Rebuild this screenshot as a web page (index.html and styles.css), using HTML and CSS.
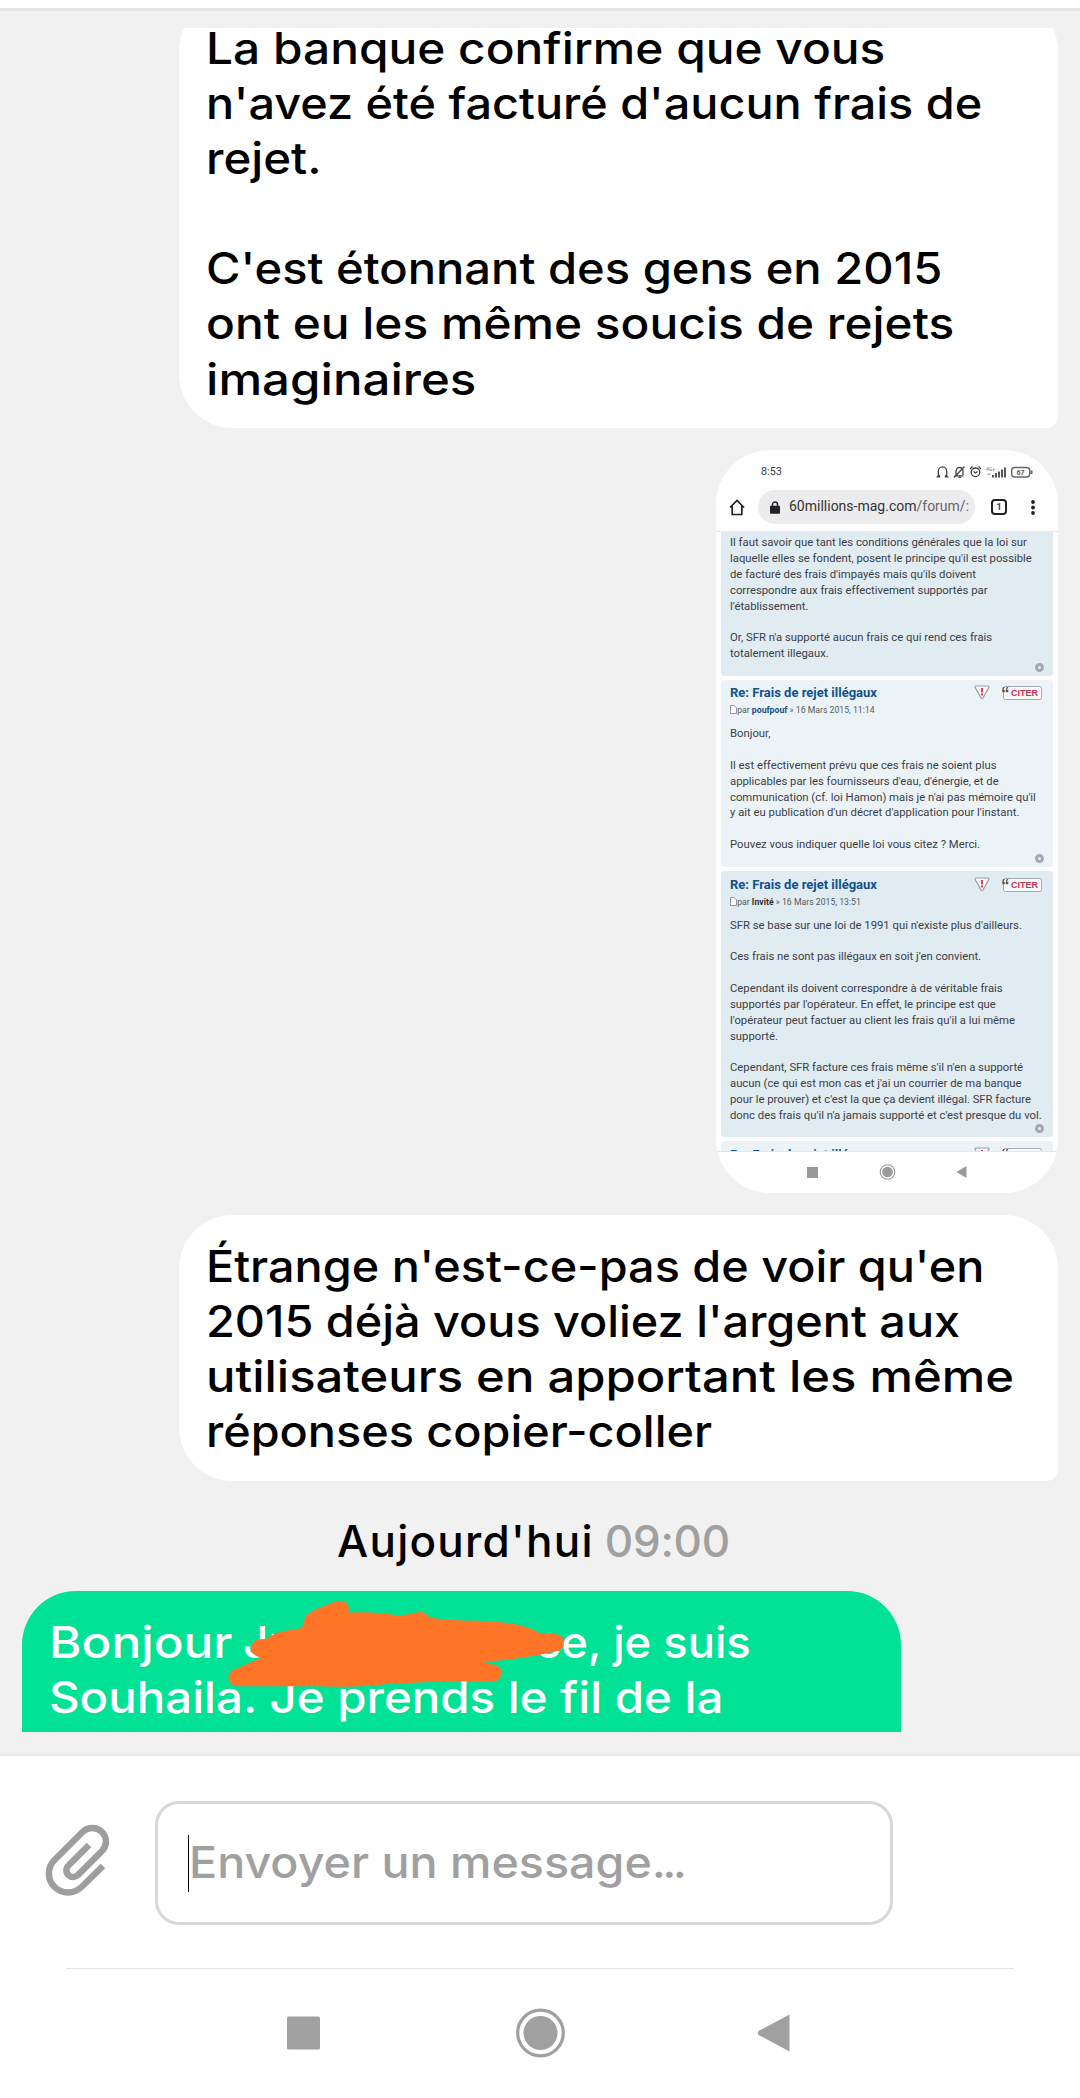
FILE: index.html
```
<!DOCTYPE html>
<html lang="fr">
<head>
    <meta charset="UTF-8">
    <meta name="viewport" content="width=device-width, initial-scale=1.0">
    <title>Messagerie</title>
    <link rel="stylesheet" href="styles.css">
</head>
<body>
    <div class="topbar"></div>

    <div class="chat">
        <div class="bubble sent first">
            <span class="line s4">La banque confirme que vous</span>
            <span class="line s1">n'avez été facturé d'aucun frais de</span>
            <span class="line s3">rejet.</span>
            <span class="line">&nbsp;</span>
            <span class="line s2">C'est étonnant des gens en 2015</span>
            <span class="line s4">ont eu les même soucis de rejets</span>
            <span class="line s6">imaginaires</span>
        </div>

        <div class="capture">
            <div class="status">
                <span class="clock">8:53</span>
                <svg class="status-icons" viewBox="0 0 98 14" width="98" height="14">
                    <g fill="none" stroke="#444" stroke-width="1.3">
                        <path d="M.5 11.800h3V10M12.500 11.800h-3V10M2.300 11.500V6.300a4.200 4.500 0 0 1 8.400 0v5.200"/>
                        <path d="M18.500 10.800h9M20 10V6.500c0-2.500 1.500-4 3.500-4s3.500 1.500 3.500 4V10M28.500 1.500L18 12.500M22.500 12.300h2.500"/>
                        <circle cx="39.500" cy="7.300" r="4.300"/>
                        <path d="M34 4l2.500-2.500M45 4l-2.500-2.500M37.500 6.500l2 1.500 2-1.500"/>
                    </g>
                    <text x="50" y="5.500" class="net">4G+</text>
                    <g fill="#555">
                        <rect x="51" y="8.500" width="3.500" height="1.500" opacity=".4"/>
                        <rect x="56" y="10" width="2" height="2.500"/>
                        <rect x="59" y="8" width="2" height="4.500"/>
                        <rect x="62" y="6.500" width="2" height="6"/>
                        <rect x="65" y="4.500" width="2" height="8"/>
                        <rect x="68" y="2.500" width="2" height="10"/>
                    </g>
                    <rect x="75.700" y="2.500" width="18" height="9.500" rx="3" fill="none" stroke="#666" stroke-width="1.400"/>
                    <rect x="94.500" y="5.500" width="2" height="3.500" fill="#666"/>
                    <text x="80.500" y="9.800" class="bat">67</text>
                </svg>
            </div>
            <div class="urlbar">
                <svg class="home" viewBox="0 0 16 17" width="16" height="17"><path d="M1 8.500L8 1.500l7 7M3.200 7v8.500h9.600V7" fill="none" stroke="#222" stroke-width="1.700"/></svg>
                <div class="url">
                    <svg viewBox="0 0 10 13" width="10" height="13"><path d="M2.500 6V3.500a2.500 2.500 0 0 1 5 0V6" fill="none" stroke="#222" stroke-width="1.400"/><rect y="4.800" width="10" height="8" rx="1" fill="#222"/></svg>
                    <span>60millions-mag.com<em>/forum/:</em></span>
                </div>
                <div class="tabs">1</div>
                <svg class="dots" viewBox="0 0 4 15" width="4" height="15" fill="#222"><circle cx="2" cy="2" r="1.900"/><circle cx="2" cy="7.500" r="1.900"/><circle cx="2" cy="13" r="1.900"/></svg>
            </div>
            <div class="forum">
                <div class="post post-a">
                    Il faut savoir que tant les conditions générales que la loi sur<br>
                    laquelle elles se fondent, posent le principe qu'il est possible<br>
                    de facturé des frais d'impayés mais qu'ils doivent<br>
                    correspondre aux frais effectivement supportés par<br>
                    l'établissement.<br><br>
                    Or, SFR n'a supporté aucun frais ce qui rend ces frais<br>
                    totalement illegaux.
                    <i class="up"></i>
                </div>
                <div class="post post-b">
                    <div class="head">
                        <h3>Re: Frais de rejet illégaux</h3>
                        <svg class="warn" viewBox="0 0 16 15" width="16" height="15"><path d="M2 1h12q1.300.2.800 1.500L9 13q-1 1.500-2 0L1.200 2.500Q.8 1.200 2 1z" fill="#fafafa" stroke="#999ca3" stroke-width="1.200"/><path d="M8 3v4.500M8 8.600v1.800" stroke="#c2264c" stroke-width="1.700"/></svg>
                        <span class="cite"><b>“</b>CITER</span>
                    </div>
                    <div class="author"><svg viewBox="0 0 7 9" width="7" height="9"><path d="M.5.5h3.500l2.500 2.500v5.500h-6z" fill="#fff" stroke="#888" stroke-width=".9"/></svg> par <b class="link">poufpouf</b> » 16 Mars 2015, 11:14</div>
                    Bonjour,<br><br>
                    Il est effectivement prévu que ces frais ne soient plus<br>
                    applicables par les fournisseurs d'eau, d'énergie, et de<br>
                    communication (cf. loi Hamon) mais je n'ai pas mémoire qu'il<br>
                    y ait eu publication d'un décret d'application pour l'instant.<br><br>
                    Pouvez vous indiquer quelle loi vous citez ? Merci.
                    <i class="up"></i>
                </div>
                <div class="post post-c">
                    <div class="head">
                        <h3>Re: Frais de rejet illégaux</h3>
                        <svg class="warn" viewBox="0 0 16 15" width="16" height="15"><path d="M2 1h12q1.300.2.800 1.500L9 13q-1 1.500-2 0L1.200 2.500Q.8 1.200 2 1z" fill="#fafafa" stroke="#999ca3" stroke-width="1.200"/><path d="M8 3v4.500M8 8.600v1.800" stroke="#c2264c" stroke-width="1.700"/></svg>
                        <span class="cite"><b>“</b>CITER</span>
                    </div>
                    <div class="author"><svg viewBox="0 0 7 9" width="7" height="9"><path d="M.5.5h3.500l2.500 2.500v5.500h-6z" fill="#fff" stroke="#888" stroke-width=".9"/></svg> par <b>Invité</b> » 16 Mars 2015, 13:51</div>
                    SFR se base sur une loi de 1991 qui n'existe plus d'ailleurs.<br><br>
                    Ces frais ne sont pas illégaux en soit j'en convient.<br><br>
                    Cependant ils doivent correspondre à de véritable frais<br>
                    supportés par l'opérateur. En effet, le principe est que<br>
                    l'opérateur peut factuer au client les frais qu'il a lui même<br>
                    supporté.<br><br>
                    Cependant, SFR facture ces frais même s'il n'en a supporté<br>
                    aucun (ce qui est mon cas et j'ai un courrier de ma banque<br>
                    pour le prouver) et c'est la que ça devient illégal. SFR facture<br>
                    donc des frais qu'il n'a jamais supporté et c'est presque du vol.
                    <i class="up"></i>
                </div>
                <div class="post post-d">
                    <div class="head">
                        <h3>Re: Frais de rejet illégaux</h3>
                        <svg class="warn" viewBox="0 0 16 15" width="16" height="15"><path d="M2 1h12q1.300.2.800 1.500L9 13q-1 1.500-2 0L1.200 2.500Q.8 1.200 2 1z" fill="#fafafa" stroke="#999ca3" stroke-width="1.200"/><path d="M8 3v4.500M8 8.600v1.800" stroke="#c2264c" stroke-width="1.700"/></svg>
                        <span class="cite"><b>“</b>CITER</span>
                    </div>
                </div>
            </div>
            <div class="mini-nav">
                <svg viewBox="0 0 162 16" width="162" height="16" fill="#999">
                    <rect x="1" y="3" width="11" height="11"/>
                    <circle cx="81.500" cy="8" r="7.300" fill="none" stroke="#999" stroke-width="1.100"/>
                    <circle cx="81.500" cy="8" r="5.300"/>
                    <path d="M150.500 8l10-6v12z"/>
                </svg>
            </div>
        </div>

        <div class="bubble sent">
            <span class="line s1">Étrange n'est-ce-pas de voir qu'en</span>
            <span class="line s1">2015 déjà vous voliez l'argent aux</span>
            <span class="line s5">utilisateurs en apportant les même</span>
            <span class="line s1">réponses copier-coller</span>
        </div>

        <div class="date"><span class="day">Aujourd'hui</span><span class="time">09:00</span></div>

        <div class="bubble received">
            <span class="line split"><span class="hello">Bonjour</span><span class="name">Ju</span><span class="rest">ce, je suis</span></span>
            <span class="line s3">Souhaila. Je prends le fil de la</span>
            <svg class="scribble" viewBox="0 0 1200 480" width="400" height="160">
                <path fill="#ff7427" d="M312 128C312 108 330 95 352 86L402 66Q420 58 436 66Q448 74 446 98C500 94 550 99 598 107C625 104 645 96 665 97Q680 99 688 113C730 118 780 122 830 122C900 122 980 134 1020 160C1050 160 1080 158 1090 178Q1096 205 1072 213C1010 228 930 240 852 245Q866 254 888 254Q905 262 904 280Q900 304 878 306C760 302 620 308 540 314C480 320 420 322 350 319L112 319C92 316 82 302 87 285Q93 270 112 265L184 233Q152 226 152 202Q158 180 182 178L202 176C225 155 265 150 292 148Q310 142 312 128Z"/>
            </svg>
        </div>
    </div>

    <div class="composer">
        <svg class="clip" viewBox="0 0 66 72" width="66" height="72">
            <path d="M44 21L23.500 41.500a6.500 6.500 0 0 0 0 9.500a6.800 6.800 0 0 0 9.500 0L57 27a13.500 13.500 0 0 0 0-19a14 14 0 0 0-19.500 0L9.500 36a19 19 0 0 0 0 27a19.500 19.500 0 0 0 27 0L58 42" fill="none" stroke="#9e9e9e" stroke-width="6.500"/>
        </svg>
        <div class="field"><i class="caret"></i><span class="placeholder">Envoyer un message<span class="ellipsis">...</span></span></div>
    </div>

    <div class="navbar">
        <svg viewBox="0 0 506 50" width="506" height="50" fill="#a0a0a0">
            <rect x="0" y="8.500" width="33" height="33" rx="1.500"/>
            <circle cx="253.500" cy="25" r="22.800" fill="none" stroke="#a0a0a0" stroke-width="3.200"/>
            <circle cx="253.500" cy="25" r="17"/>
            <path d="M471.500 23L502.500 6.500V43.500L471.500 27Q470 25 471.500 23z"/>
        </svg>
    </div>
</body>
</html>
```
FILE: styles.css
```
* {
    box-sizing: border-box;
}

body {
    margin: 0;
    height: 2098px;
    display: flex;
    flex-direction: column;
    overflow: hidden;
    background-color: #f1f1f1;
    font-family: Inter, "Open Sans", sans-serif;
    font-size: 44px;
    font-weight: 500;
    line-height: 55.1px;
    color: #000;
}

.topbar {
    flex: none;
    height: 11px;
    background-color: #fff;
    border-bottom: 3px solid #e5e5e5;
}

/* conversation */
.chat {
    flex: none;
    height: 1704px;
    margin-top: 17px;
    padding: 0 22px;
    display: flex;
    flex-direction: column;
    overflow: hidden;
}

.bubble {
    position: relative;
    flex: none;
    width: 879px;
    padding: 24px 25px 21.5px 27px;
}

.sent {
    align-self: flex-end;
    background-color: #fff;
    border-radius: 54px 54px 12px 54px;
}

.first {
    margin-top: -31px;
}

.received {
    align-self: flex-start;
    background-color: #02e296;
    border-radius: 54px 54px 0 0;
    color: #fff;
    height: 200px;
}

.line {
    display: block;
    width: max-content;
    white-space: pre;
    transform-origin: left;
}

/* wide letterforms */
.s1 { transform: scaleX(1.063); }
.s2 { transform: scaleX(1.07); }
.s3 { transform: scaleX(1.077); }
.s4 { transform: scaleX(1.087); }
.s5 { transform: scaleX(1.113); }
.s6 { transform: scaleX(1.118); }

.split {
    display: flex;
}

.hello,
.rest {
    transform-origin: left;
    transform: scaleX(1.125);
}

.name {
    width: 323px;
    padding-left: 31px;
}

.rest {
    transform: scaleX(1.03);
}

.scribble {
    position: absolute;
    left: 178px;
    top: -11px;
}

.date {
    flex: none;
    display: flex;
    justify-content: center;
    gap: 11px;
    margin: 33px 0 22px;
    padding-right: 13px;
}

.day {
    letter-spacing: 1.25px;
}

.time {
    color: #a0a0a0;
    letter-spacing: -0.2px;
}

/* attached phone capture */
.capture {
    flex: none;
    align-self: flex-end;
    width: 342px;
    height: 743px;
    margin: 22px 0;
    border-radius: 54px;
    overflow: hidden;
    background-color: #fefefe;
    font-family: Roboto, sans-serif;
    font-weight: 400;
    font-size: 11.3px;
    line-height: 15.85px;
    color: #3a4046;
}

.status {
    height: 38px;
    padding: 5px 24px 0 45px;
    display: flex;
    justify-content: space-between;
    align-items: center;
}

.clock {
    font-size: 10.8px;
}

.net {
    font-size: 5px;
    fill: #777;
}

.bat {
    font-size: 7px;
    font-weight: 700;
    fill: #555;
}

.urlbar {
    height: 44px;
    padding: 0 23px 5px 13px;
    display: flex;
    align-items: center;
    border-bottom: 1px solid #e6e6e8;
}

.url {
    width: 217px;
    height: 34px;
    margin: 0 16px 0 13px;
    padding-left: 12px;
    display: flex;
    align-items: center;
    gap: 9px;
    border-radius: 17px;
    background-color: #ececef;
    font-size: 14px;
    color: #333;
    white-space: nowrap;
}

.url em {
    font-style: normal;
    color: #666;
}

.tabs {
    width: 16px;
    height: 16px;
    margin-right: auto;
    border: 2px solid #222;
    border-radius: 4px;
    font-size: 9px;
    font-weight: 700;
    line-height: 12px;
    text-align: center;
}

.forum {
    height: 619px;
    padding: 0 5px;
    overflow: hidden;
}

.post {
    position: relative;
    margin-bottom: 4px;
    padding: 3px 9px 0;
    border-radius: 4px;
    white-space: nowrap;
}

.post-a {
    height: 144px;
    border-radius: 0 0 4px 4px;
    background-color: #e1ebf2;
}

.post-b {
    height: 187px;
    background-color: #ecf3f7;
}

.post-c {
    height: 266px;
    padding-top: 3.5px;
    background-color: #e1ebf2;
}

.post-d {
    height: 40px;
    padding-top: 4px;
    background-color: #ecf3f7;
}

.head {
    display: flex;
    height: 20px;
}

.head h3 {
    margin: 0;
    width: 244px;
    font-size: 13px;
    line-height: 20px;
    color: #105289;
}

.warn {
    margin-top: 2px;
}

.cite {
    position: relative;
    width: 39px;
    height: 14px;
    margin: 3px 0 0 13px;
    padding-left: 7px;
    border: 1px solid #a5a8ad;
    border-radius: 2.5px;
    background-color: #fafafa;
    font: bold 9px/12px "Liberation Sans", sans-serif;
    color: #c2304f;
}

.cite b {
    position: absolute;
    left: -3px;
    top: -2px;
    font-size: 17px;
    line-height: 17px;
    color: #555;
}

.author {
    height: 23px;
    font-size: 8.7px;
    line-height: 15px;
    color: #555b61;
}

.author svg {
    vertical-align: -1px;
    margin-right: -2px;
}

.author b {
    color: #333;
}

.author .link {
    color: #105289;
}

.up {
    position: absolute;
    right: 9.5px;
    bottom: 4.5px;
    width: 9px;
    height: 9px;
    border: 3px solid #a3a7b0;
    border-radius: 50%;
    background-color: #eee;
}

.mini-nav {
    padding: 12px 0 0 90px;
    line-height: 0;
    height: 42px;
    background-color: #fefefe;
    border-top: 1px solid #e4e8ea;
}

/* message composer */
.composer {
    flex: none;
    height: 214px;
    margin-top: 22px;
    padding: 45px 45px 0;
    display: flex;
    border-top: 2px solid #e6e8ea;
    background-color: #fff;
}

.clip {
    margin-top: 23px;
}

.field {
    width: 738px;
    height: 124px;
    margin-left: 44px;
    padding-left: 30px;
    display: flex;
    align-items: center;
    border: 3px solid #d8d8d8;
    border-radius: 24px;
}

.caret {
    width: 1px;
    height: 57px;
    background-color: #000;
}

.placeholder {
    color: #a0a0a0;
    white-space: nowrap;
    transform-origin: left;
    transform: scaleX(1.06);
}

.ellipsis {
    letter-spacing: -3.5px;
}

.navbar {
    flex: 1;
    display: flex;
    justify-content: center;
    padding: 40px 0 0;
    background: linear-gradient(#e3e3e3, #e3e3e3) center 0 / 948px 1px no-repeat #fff;
}
```
